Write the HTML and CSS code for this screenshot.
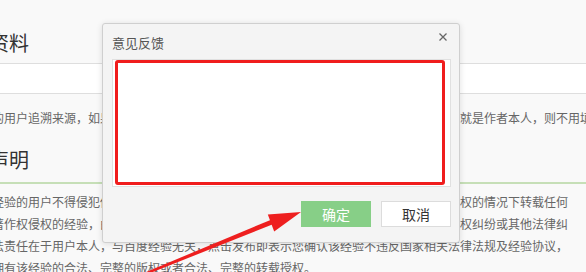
FILE: index.html
```html
<!DOCTYPE html>
<html lang="zh-CN">
<head>
  <meta charset="UTF-8" />
  <meta name="viewport" content="width=device-width, initial-scale=1.0" />
  <title>意见反馈</title>
  <link rel="stylesheet" href="styles.css">
</head>
<body>
  <div class="page">
    <h2 class="section-title">资料</h2>
    <div class="source-input"></div>
    <p class="hint">的用户追溯来源，如果经验内容并非转载，而是由您亲自原创撰写的，或者经验的原作者就是作者本人，则不用填写</p>

    <h2 class="section-title second">声明</h2>
    <div class="divider"></div>
    <div class="statement">
      <div>经验的用户不得侵犯他人的著作权等合法权益，不得在未经原作者或其版权方书面明确授权的情况下转载任何</div>
      <div>著作权侵权的经验，由此而引起的一切版权、知识产权、肖像权、名誉权、隐私权及著作权纠纷或其他法律纠</div>
      <div>法责任在于用户本人，与百度经验无关，点击发布即表示您确认该经验不违反国家相关法律法规及经验协议，</div>
      <div>拥有该经验的合法、完整的版权或者合法、完整的转载授权。</div>
    </div>
  </div>

  <div class="dialog">
    <div class="dialog-head">
      意见反馈
      <svg class="dialog-close" width="8" height="8" viewBox="0 0 8 8">
        <path d="M0.5 0.5 L7.5 7.5 M7.5 0.5 L0.5 7.5" stroke="#666" stroke-width="1.3" fill="none" />
      </svg>
    </div>
    <div class="feedback-box">
      <div class="mark"></div>
    </div>
    <div class="dialog-actions">
      <button class="btn btn-primary">确定</button>
      <button class="btn btn-secondary">取消</button>
    </div>
  </div>

  <!-- красная стрелка поверх скриншота -->
  <svg class="arrow" width="586" height="272" viewBox="0 0 586 272">
    <polygon points="120.4,284.9 119.6,283.1 271.1,219.7 272.9,224.3" fill="#ee1f1f" />
    <polygon points="301,212 267.8,214.6 274.2,231.4" fill="#ee1f1f" />
  </svg>
</body>
</html>
```

FILE: styles.css
```css
body {
  margin: 0;
  background: #f9f9f9;
  font-family: "Noto Sans CJK SC", "Noto Sans", sans-serif;
  overflow: hidden;
}
.page {
  margin-left: -8px;
  padding-top: 30px;
}
.section-title {
  margin: 0 0 0 -3px;
  font-size: 20px;
  font-weight: normal;
  line-height: 26px;
  color: #333;
}
.section-title.second {
  margin-top: 18px;
}
.source-input {
  box-sizing: border-box;
  height: 31px;
  margin-top: 7px;
  margin-right: -30px;
  background: #fff;
  border: 1px solid #dedede;
}
.hint {
  margin: 13px 0 0;
  font-size: 12px;
  line-height: 22px;
  color: #666;
  white-space: nowrap;
}
.divider {
  height: 2px;
  margin-top: 9px;
  background: #c6dfb7;
}
.statement {
  margin-top: 7px;
  font-size: 12px;
  line-height: 22px;
  color: #666;
  white-space: nowrap;
}

.dialog {
  position: absolute;
  left: 102px;
  top: 23px;
  width: 358px;
  height: 220px;
  box-sizing: border-box;
  padding: 0 8px 0 9px;
  background: #f4f4f4;
  border: 1px solid #cfcfcf;
  border-radius: 3px;
  box-shadow: 0 1px 6px rgba(0, 0, 0, 0.12);
}
.dialog-head {
  position: relative;
  box-sizing: border-box;
  height: 35px;
  padding-top: 11px;
  font-size: 13px;
  line-height: 16px;
  color: #555;
}
.dialog-close {
  position: absolute;
  top: 9px;
  right: 4px;
}
.feedback-box {
  position: relative;
  box-sizing: border-box;
  height: 128px;
  background: #fff;
  border: 1px solid #e0e0e0;
}
.mark {
  position: absolute;
  left: 2px;
  top: 0;
  width: 330px;
  height: 125px;
  box-sizing: border-box;
  border: 3px solid #f01c1c;
  border-radius: 3px;
}
.dialog-actions {
  display: flex;
  justify-content: flex-end;
  gap: 10px;
  margin-top: 14px;
}
.btn {
  width: 70px;
  height: 26px;
  box-sizing: border-box;
  padding: 0;
  font-family: inherit;
  font-size: 14px;
  line-height: 24px;
  border: 1px solid;
  border-radius: 0;
}
.btn-primary {
  background: #87cf87;
  border-color: #87cf87;
  color: #fff;
}
.btn-secondary {
  background: #fff;
  border-color: #dcdcdc;
  color: #333;
}

.arrow {
  position: absolute;
  left: 0;
  top: 0;
  pointer-events: none;
}
```
